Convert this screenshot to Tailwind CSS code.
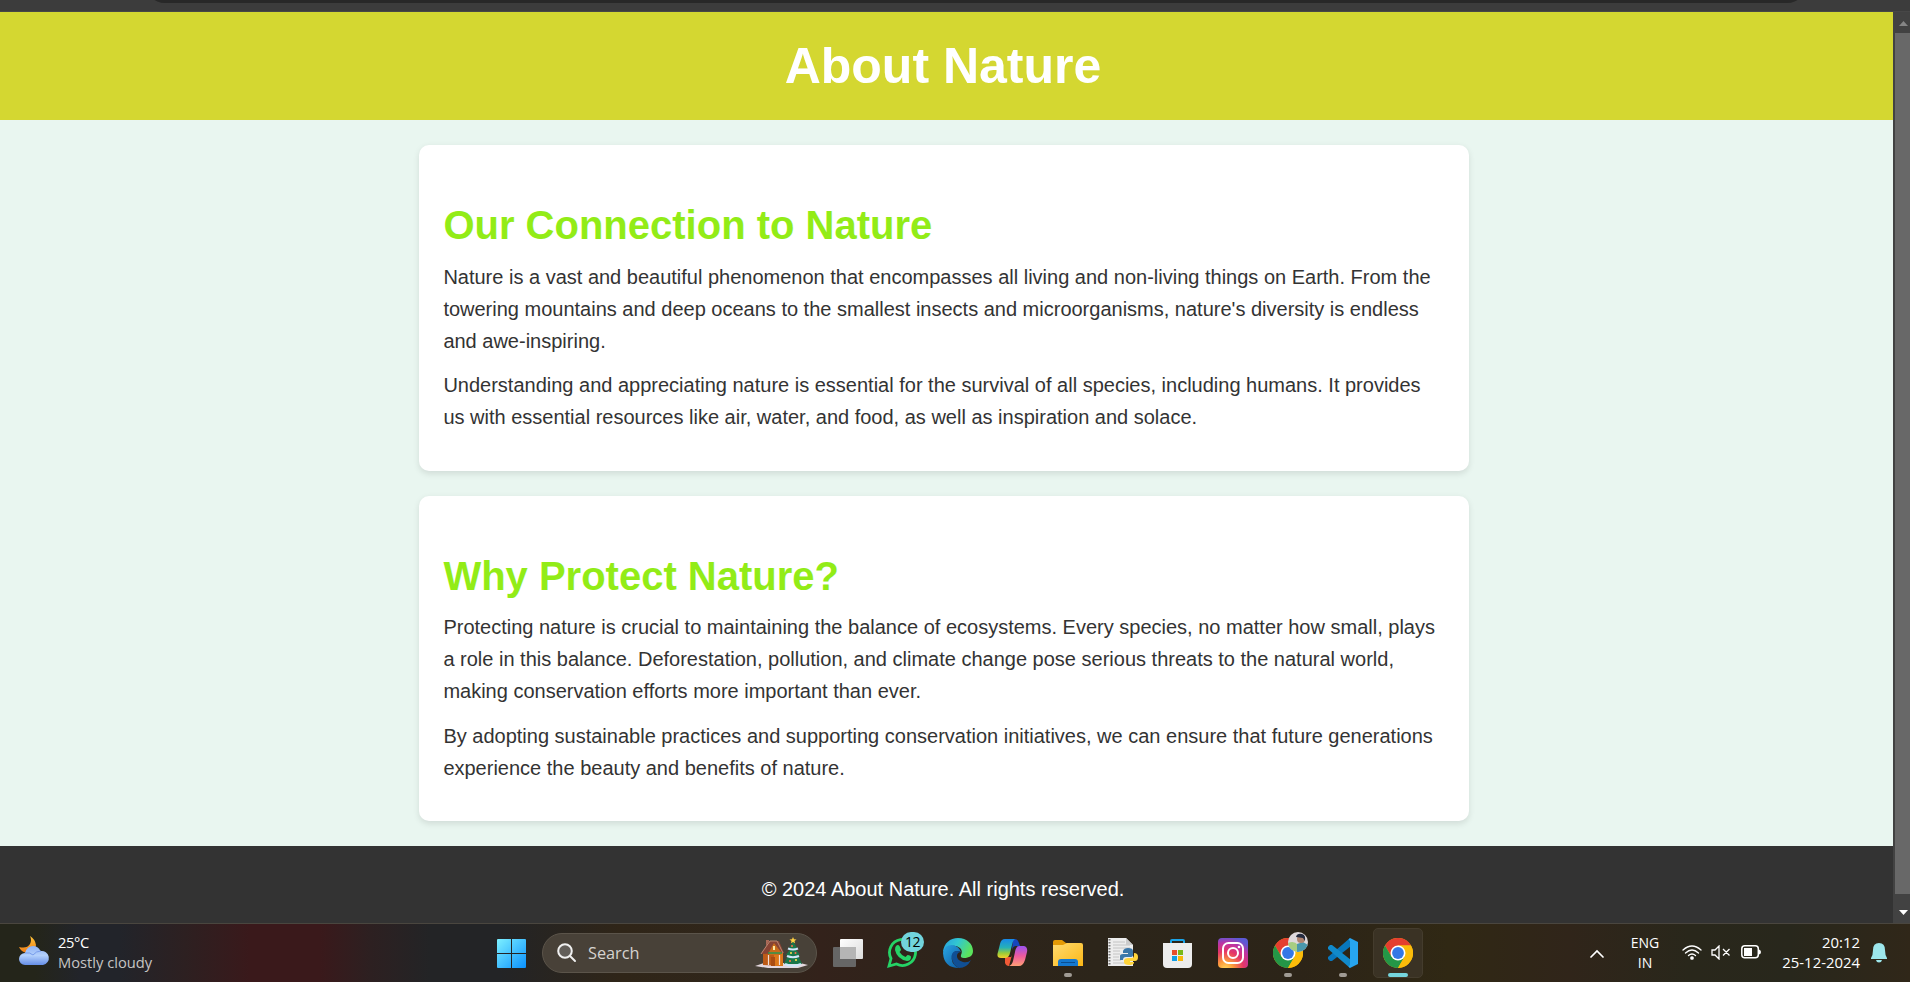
<!DOCTYPE html>
<html lang="en">
<head>
<meta charset="utf-8">
<title>About Nature</title>
<script src="https://cdn.jsdelivr.net/npm/@tailwindcss/browser@4"></script>
</head>
<body class="w-[1910px] h-[982px] overflow-hidden flex flex-col bg-[#333333] font-['Liberation_Sans',Arial,sans-serif]">
<!-- Browser chrome -->
<div class="h-3 shrink-0 bg-[#3c3c3c] border-b border-[#474747] flex items-start overflow-hidden">
  <div class="ml-[145px] -mt-[37px] w-[1662px] h-10 shrink-0 bg-[#282828] rounded-b-[20px]"></div>
</div>
<div class="h-[911px] shrink-0 flex">
  <div class="w-[1893px] bg-[#e9f6f0] flex flex-col">
    <header class="h-[108px] shrink-0 bg-[#d4d731] text-center text-white pt-[14px] pr-[7px]">
      <h1 class="text-[50px] leading-[80px] font-bold">About Nature</h1>
    </header>
    <main class="pt-[25px] pl-[418.700px] flex flex-col gap-[25px] text-[#333333] text-[20px] leading-8">
      <section class="w-[1050px] h-[326px] bg-white rounded-[10px] px-[24.700px] pt-[48px] shadow-[0_2.5px_6px_rgba(0,0,0,0.1)]">
        <h2 class="text-[40px] leading-[64px] font-bold text-[#92ec17] whitespace-nowrap">Our Connection to Nature</h2>
        <div class="flex flex-col gap-3 mt-1 whitespace-nowrap">
        <p>Nature is a vast and beautiful phenomenon that encompasses all living and non-living things on Earth. From the<br>towering mountains and deep oceans to the smallest insects and microorganisms, nature's diversity is endless<br>and awe-inspiring.</p>
        <p>Understanding and appreciating nature is essential for the survival of all species, including humans. It provides<br>us with essential resources like air, water, and food, as well as inspiration and solace.</p>
        </div>
      </section>
      <section class="w-[1050px] h-[325px] bg-white rounded-[10px] px-[24.700px] pt-[48px] shadow-[0_2.5px_6px_rgba(0,0,0,0.1)]">
        <h2 class="text-[40px] leading-[64px] font-bold text-[#92ec17] whitespace-nowrap">Why Protect Nature?</h2>
        <div class="flex flex-col gap-[13px] mt-[3px] whitespace-nowrap">
        <p>Protecting nature is crucial to maintaining the balance of ecosystems. Every species, no matter how small, plays<br>a role in this balance. Deforestation, pollution, and climate change pose serious threats to the natural world,<br>making conservation efforts more important than ever.</p>
        <p>By adopting sustainable practices and supporting conservation initiatives, we can ensure that future generations<br>experience the beauty and benefits of nature.</p>
        </div>
      </section>
    </main>
    <footer class="mt-[25px] flex-1 bg-[#333333] text-white text-[20px] leading-8 text-center pt-[27px] pr-[7px]">© 2024 About Nature. All rights reserved.</footer>
  </div>
  <!-- Scrollbar -->
  <div class="w-[17px] bg-[#424242] flex flex-col pl-[2px]">
    <svg class="w-[15px] h-[21px] shrink-0" viewBox="0 0 15 21"><path d="M4 14 8.500 9 13 14Z" fill="#858585"/></svg>
    <div class="h-[861px] bg-[#686868]"></div>
    <svg class="w-[15px] h-[29px] shrink-0" viewBox="0 0 15 29"><path d="M4 16H13L8.500 21Z" fill="#fff"/></svg>
  </div>
</div>
<!-- Taskbar -->
<div class="h-[59px] shrink-0 border-t border-[#4a463f] bg-[linear-gradient(90deg,#24251a_0px,#24251a_35px,#22242a_80px,#22242a_120px,#2d2021_185px,#3a191b_250px,#3a191b_320px,#2d2021_370px,#232426_430px,#232426_500px,#2f2518_620px,#30261b_760px,#33221b_820px,#2e241b_940px,#2c251a_1100px,#2c2418_1300px,#302814_1450px,#30251a_1570px,#29271b_1690px,#28271c_1790px,#302719_1910px)] flex font-['Open_Sans','Noto_Sans',sans-serif] text-white">
  <div class="w-[484px] flex pl-[18px]">
    <svg class="w-8 h-8 mt-[12px]" viewBox="0 0 32 32">
      <defs><linearGradient id="moon" x2="0" y2="1"><stop stop-color="#ffc53b"/><stop offset="1" stop-color="#ee7b16"/></linearGradient><linearGradient id="cloud" x2="0" y2="1"><stop stop-color="#8fb2f5"/><stop offset=".5" stop-color="#b3d0fc"/><stop offset="1" stop-color="#658ee7"/></linearGradient></defs>
      <path d="M12 0Q17 3 18 9Q17 18 9 17Q3 16 1 11Q9 13 12 8Q14 4 12 0Z" fill="url(#moon)"/>
      <path d="M7 29A6 6 0 0 1 7 17Q9 10 15 10Q20 10 22.500 15A7 7 0 1 1 25 29Z" fill="url(#cloud)"/>
      <path d="M7 17Q12 16 15 19M15 19Q18 15 23 15" stroke="#789ceb" fill="none"/>
    </svg>
    <div class="pl-2 pt-[8px] text-[14.700px] leading-5 whitespace-nowrap"><div class="tracking-[-0.4px]">25°C</div><div class="text-[#c6c5c4]">Mostly cloudy</div></div>
  </div>
  <div class="w-[55px] flex justify-center pt-[15px]">
    <svg class="w-[29px] h-[29px]" viewBox="0 0 29 29"><defs><linearGradient id="win" gradientUnits="userSpaceOnUse" x1="0" y1="0" x2="29" y2="29"><stop stop-color="#7df0ff"/><stop offset="1" stop-color="#0a91ff"/></linearGradient></defs><path d="M0 1Q0 0 1 0H14V14H0ZM15 0H28Q29 0 29 1V14H15ZM0 15H14V29H1Q0 29 0 28ZM15 15H29V28Q29 29 28 29H15Z" fill="url(#win)"/></svg>
  </div>
  <div class="ml-[3px] mt-[9px] w-[275px] h-10 rounded-full border border-[#5b544a] bg-[#484138] flex items-center pl-[14px] pr-[7px]">
    <svg class="w-5 h-5" viewBox="0 0 20 20" fill="#625e59" stroke="#f0f0f0" stroke-width="2"><circle cx="8" cy="8" r="6.800"/><path d="m13 13 5 5" stroke-linecap="round"/></svg>
    <span class="ml-[11px] text-[16.300px] leading-6 text-[#d6d3cf]">Search</span>
    <svg class="ml-auto w-[55px] h-8" viewBox="0 0 55 32">
      <path d="M1 29 10 26H46L54 28 44 31H14Z" fill="#e4d9df"/>
      <path d="M9 15 18 5 29 15V29L9 28Z" fill="#bd5b17"/><path d="M20 15H29V29H20Z" fill="#dc7719"/>
      <path d="M12 3H15V11L12 13Z" fill="#a96a58"/><path d="m7 17 8-13h10l5 12" fill="#874334"/><path d="M15 15 20 6 27 15V18H15Z" fill="#c96c1b"/>
      <path d="m7 17 2-3 7-10h7l6 12" fill="none" stroke="#b98773" stroke-width="1"/>
      <path d="M19 9h2v4h-2z" fill="#ffe8a0"/><path d="M17 20h4v9h-4z" fill="#a94c12"/><path d="M14 16h14" stroke="#2b9650" stroke-width="1.500"/><path d="M14.500 18v10M25.500 18v10" stroke="#f4dfd4" stroke-width="1.200"/>
      <path d="m39 4 4 7h-2l5 7h-2l4 9H30l4-9h-2l5-7h-2Z" fill="#18764a"/>
      <path d="M34 11.500q5 2 10 0M33 19q6 2.500 12 0M31 27q8 3.500 16 0" stroke="#cfe6fa" stroke-width="2.200" fill="none"/>
      <path d="m39 0 1 2.200 2.500.2-2 1.700.7 2.200-2.200-1.300-2.200 1.300.7-2.200-2-1.700 2.500-.2Z" fill="#ffd044"/>
      <g fill="#ff6f48"><circle cx="38" cy="9" r="1"/><circle cx="41.500" cy="16" r="1"/><circle cx="36" cy="24" r="1.100"/></g><g fill="#ffe14c"><circle cx="37" cy="16" r="1"/><circle cx="42" cy="23" r="1.100"/></g>
    </svg>
  </div>
  <div class="ml-[3px] flex h-[58px]">
    <!-- Task view -->
    <div class="w-[55px] flex justify-center pt-[14px]"><svg class="w-[30px] h-[30px]" viewBox="0 0 30 30"><defs><linearGradient id="tv" x2="1" y2="1"><stop stop-color="#fff"/><stop offset="1" stop-color="#dcdcdc"/></linearGradient></defs><rect x="7" y="1" width="23" height="20" rx="1" fill="url(#tv)"/><rect y="9" width="23" height="20" rx="1" fill="#666"/><path d="M7 9H23V21H7Z" fill="#b5b5b5"/></svg></div>
    <!-- WhatsApp -->
    <div class="relative w-[55px] flex justify-center pt-[13px]"><svg class="w-[31px] h-[31px]" viewBox="0 0 31 31"><path d="M2 29 4 21.500A13 13 0 1 1 9.500 27Z" fill="none" stroke="#25d366" stroke-width="2.800"/><path d="M9 9Q11 7 12.500 9L14 12.500Q14 13.500 12.500 15Q15 19 18.500 20L20.500 18Q24 18.500 24 20Q24 24 20 24Q10 22 8 13Q8 10 9 9Z" fill="#25d366"/></svg>
      <span class="absolute left-[26px] top-[8px] w-[23px] h-5 rounded-full bg-[#72d4dd] text-black text-[14px] leading-5 text-center tracking-[-0.5px]">12</span></div>
    <!-- Edge -->
    <div class="w-[55px] flex justify-center pt-[14px]"><svg class="w-[30px] h-[30px]" viewBox="0 0 30 30"><defs><linearGradient id="e1" x2="1" y2=".4"><stop stop-color="#279de2"/><stop offset=".5" stop-color="#32c7d0"/><stop offset="1" stop-color="#5be35c"/></linearGradient><linearGradient id="e2" x2="1" y2="1"><stop stop-color="#2aa6e3"/><stop offset="1" stop-color="#0c59a4"/></linearGradient></defs>
      <path d="M0 14C1 5 7 0 15 0C24 0 30 6 30 13C30 18 26 20 21 20Q17 20 18 17Q20 13 17 10Q9 4 0 14Z" fill="url(#e1)"/><path d="M0 15Q1 7 9 7Q16 8 18 14Q12 11 9 17Q7 26 16 30Q1 30 0 15Z" fill="url(#e2)"/><path d="M18 14Q10 11 8.500 18Q9 27 16 30Q24 30 28 22Q25 25 20 24Q13 22 14 17Q15 14 18 14Z" fill="#104f94"/></svg></div>
    <!-- Copilot -->
    <div class="w-[55px] flex justify-center pt-[14px]"><svg class="w-[31px] h-[30px]" viewBox="0 0 31 30"><defs><linearGradient id="c1" x2="0" y2="1"><stop stop-color="#1788e9"/><stop offset=".45" stop-color="#26b1b7"/><stop offset=".75" stop-color="#9bcd38"/><stop offset="1" stop-color="#f4d12a"/></linearGradient><linearGradient id="c2" x2="0" y2="1"><stop stop-color="#9a52f0"/><stop offset=".5" stop-color="#ee5a9e"/><stop offset="1" stop-color="#ff9f75"/></linearGradient></defs>
      <path d="M16 1H18Q21 1 22 5L23 8H19Q16 8 15 12Z" fill="#1746bd"/><path d="M8 19H14L15 17L12 28Q9 28 8 25Z" fill="#f15a36"/><path d="M8 1H18Q16 2 15 7L13 15Q12 20 8 20H4Q-1 20 1 14L3 6Q4 1 8 1Z" fill="url(#c1)"/><path d="M22 8H27Q31 9 30 14L28 22Q26 28 22 28H12Q15 27 16 23L18 14Q19 8 22 8Z" fill="url(#c2)"/></svg></div>
    <!-- Explorer -->
    <div class="w-[55px] flex flex-col items-center pt-[16px]"><svg class="w-[30px] h-[27px] shrink-0" viewBox="0 0 30 27"><defs><linearGradient id="f1" x2="1" y2="1"><stop stop-color="#ffdb70"/><stop offset="1" stop-color="#fbb716"/></linearGradient></defs><path d="M0 2Q0 0 2 0H9L13 3H28V10H0Z" fill="#e49a05"/><path d="M0 5H10L14 3H28Q30 3 30 5V26H0Z" fill="url(#f1)"/><path d="M5 26V22Q5 19 8 19H22Q25 19 25 22V26Z" fill="#1478d0"/><path d="M8 22.500H22" stroke="#0a4e91"/></svg><i class="mt-[6px] w-2 h-1 rounded-full bg-[#a09b94]"></i></div>
    <!-- Python script -->
    <div class="w-[55px] flex justify-center pt-[14px]"><svg class="w-[32px] h-[29px]" viewBox="0 0 32 29"><path d="M1 0H19L26 7V28H1Z" fill="#ededed"/><path d="M2.500 1V28" stroke="#777" stroke-width="2" stroke-dasharray="1.500 1.500"/><path d="M6 4H18M6 7H23M6 10H23M6 13H13M6 16H13M6 19H12M6 22H14M6 25H18" stroke="#c4c4c4"/><path d="M19 0V7H26Z" fill="#ccc"/><path d="M13 22V18Q13 16 16 16H21V15H16V13Q17 10 21 10Q26 10 26 13V17Q26 19 23 19H19Q16 19 16 22Z" fill="#3c78a9"/><path d="M27 15Q31 15 31 19Q31 23 28 23H23V24H27V25Q26 27 22 27Q17 27 17 24V22Q18 20 21 20H25Q27 20 27 17Z" fill="#ffd43b"/></svg></div>
    <!-- Store -->
    <div class="w-[55px] flex justify-center pt-[14px]"><svg class="w-[29px] h-[30px]" viewBox="0 0 29 30"><path d="M8 6V3Q8 2 9 2H20Q21 2 21 3V6" fill="none" stroke="#1ba4e8" stroke-width="2"/><path d="M0 5H29V26Q29 30 25 30H4Q0 30 0 26Z" fill="#ededed"/><path d="M9 12h5v5H9z" fill="#e74d2c"/><path d="M15 12h5v5h-5z" fill="#78b818"/><path d="M9 18h5v5H9z" fill="#129de4"/><path d="M15 18h5v5h-5z" fill="#f8b80b"/></svg></div>
    <!-- Instagram -->
    <div class="w-[55px] flex justify-center pt-[14px]"><svg class="w-[30px] h-[30px]" viewBox="0 0 30 30"><defs><radialGradient id="ig" cx=".25" cy="1.050" r="1.100"><stop stop-color="#ffdc5e"/><stop offset=".25" stop-color="#fc9a3b"/><stop offset=".55" stop-color="#e53667"/><stop offset=".8" stop-color="#bd34a5"/><stop offset="1" stop-color="#5d59d5"/></radialGradient></defs><rect width="30" height="30" rx="4" fill="url(#ig)"/><rect x="5" y="5" width="20" height="20" rx="5.500" fill="none" stroke="#fff" stroke-width="2"/><circle cx="15" cy="15" r="5" fill="none" stroke="#fff" stroke-width="2"/><circle cx="21" cy="9" r="1.300" fill="#fff"/></svg></div>
    <!-- Chrome, profile window -->
    <div class="relative w-[55px] flex flex-col items-center pt-[14px]"><svg class="w-[30px] h-[30px] shrink-0" viewBox="0 0 30 30"><g id="chrome"><circle cx="15" cy="15" r="15" fill="#fbbc0a"/><path d="M2 7.500A15 15 0 0 1 28 7.500H15L8.500 18.700Z" fill="#e43e2f"/><path d="M2 7.500A15 15 0 0 0 15 30L21.500 18.700H8.500Z" fill="#249647"/><path d="M15 7.500H28A15 15 0 0 1 15 30L21.500 18.700Z" fill="#fbbc0a"/><circle cx="15" cy="15" r="7.500" fill="#fff"/><circle cx="15" cy="15" r="5.900" fill="#3477e6"/></g></svg><i class="mt-[5px] w-2 h-1 rounded-full bg-[#a09b94]"></i>
      <svg class="absolute left-[28px] top-[8px] w-5 h-5" viewBox="0 0 20 20"><defs><clipPath id="av"><circle cx="10" cy="10" r="10"/></clipPath></defs><g clip-path="url(#av)"><path d="M0 0H20V20H0Z" fill="#dfd9db"/><path d="M0 11Q6 8 10 13V20H0Z" fill="#a7cd82"/><path d="M9 20V12L15 10 20 13V20Z" fill="#4a98ad"/><circle cx="13" cy="7" r="4" fill="#b1846f"/><path d="M8 5Q9 1 14 2Q18 3 17 9L15 6Z" fill="#252c40"/></g></svg></div>
    <!-- VS Code -->
    <div class="w-[55px] flex flex-col items-center pt-[14px]"><svg class="w-[30px] h-[30px] shrink-0" viewBox="0 0 30 30"><path d="M22 0 0 19V21L2 23H4L23 8Z" fill="#0877bd"/><path d="M22 30 0 11V9L2 7H4L23 22Z" fill="#118acb"/><path d="M22 0 30 4V26L22 30 20.500 28.500 22 27V3L20.500 1.500Z" fill="#27a5ef"/></svg><i class="mt-[5px] w-2 h-1 rounded-full bg-[#a09b94]"></i></div>
    <!-- Chrome, active -->
    <div class="w-[55px] flex justify-center pt-1"><div class="w-[50px] h-[50px] rounded-[5px] border border-[#443c2d] bg-[#3a3224] flex flex-col items-center pt-[9px]"><svg class="w-[30px] h-[30px] shrink-0" viewBox="0 0 30 30"><use href="#chrome"/></svg><i class="mt-[5px] w-5 h-1 shrink-0 rounded-full bg-[#75d5dc]"></i></div></div>
  </div>
  <div class="ml-auto w-[320px] flex text-[14px] leading-5 whitespace-nowrap">
    <svg class="mt-[25px] w-[14px] h-[9px]" viewBox="0 0 14 9" fill="none" stroke="#fff" stroke-width="1.700"><path d="M1 8 7 2 13 8" stroke-linecap="round"/></svg>
    <div class="ml-[24px] w-[34px] pt-[9px] text-center">ENG<br>IN</div>
    <svg class="ml-[20px] mt-[21px] w-5 h-[15px]" viewBox="0 0 20 15" fill="none" stroke="#fff" stroke-width="1.300" stroke-linecap="round"><path d="M1 5Q10-3 19 5M3.500 8Q10 2 16.500 8M6.500 10.500Q10 7.500 13.500 10.500"/><circle cx="10" cy="13" r="1.200" fill="#fff"/></svg>
    <svg class="ml-[9px] mt-[21px] w-[20px] h-[15px]" viewBox="0 0 20 15" fill="none" stroke="#fff" stroke-width="1.300"><path d="M1 5H4L8 1V14L4 10H1ZM12 4l6.500 6.500M18.500 4 12 10.500"/></svg>
    <svg class="ml-[10px] mt-[21px] w-[21px] h-[14px]" viewBox="0 0 21 14"><rect x=".8" y=".8" width="16.500" height="12" rx="3" fill="none" stroke="#fff" stroke-width="1.500"/><path d="M3 3H11V11H3ZM18 4.500Q20 5 20 7T18 9.500Z" fill="#fff"/></svg>
    <div class="ml-auto pt-[8px] text-right text-[14.900px]">20:12<br>25-12-2024</div>
    <svg class="ml-[11px] mr-[23px] mt-[19px] w-4 h-5" viewBox="0 0 16 20"><path d="M0 15Q2 12 2 7Q2 0 8 0T14 7Q14 12 16 15V16H0ZM5 17H11Q10.500 19.500 8 19.500T5 17Z" fill="#9de7ec"/></svg>
  </div>
</div>
</body>
</html>
